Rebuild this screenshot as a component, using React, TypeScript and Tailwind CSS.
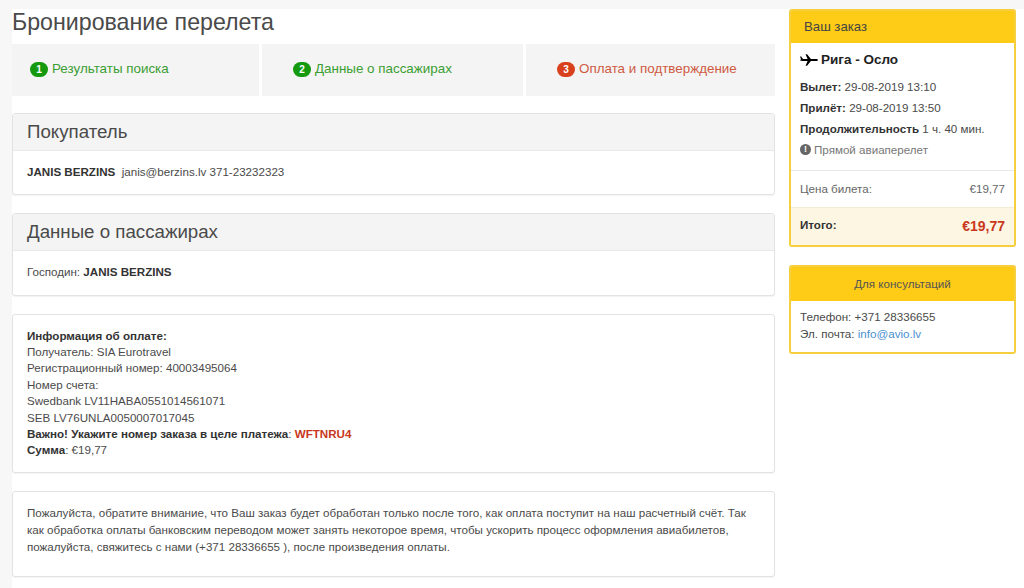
import React from 'react';

function Step({ n, label, red, width, pad }: { n: number; label: string; red?: boolean; width: string; pad: string }) {
  return (
    <div className={`${width} ${pad} h-[52px] pb-[2px] bg-[#f4f4f4] flex items-center`}>
      <span className={`w-[18px] h-[15px] rounded-full text-white text-[10px] font-bold flex items-center justify-center mr-[4px] ${red ? 'bg-[#d9411e]' : 'bg-[#159a0f]'}`}>
        {n}
      </span>
      <span className={`text-[13.4px] ${red ? 'text-[#cf5a42]' : 'text-[#3b9e33]'}`}>{label}</span>
    </div>
  );
}

function Card({ title, children, bodyClass }: { title?: string; children: React.ReactNode; bodyClass: string }) {
  return (
    <section className="border border-[#e3e3e3] rounded-[3px] shadow-[0_1px_1px_rgba(0,0,0,0.05)] bg-white">
      {title && (
        <div className="h-[37px] bg-[#f4f4f4] border-b border-[#e8e8e8] px-[14px] flex items-center text-[18.7px] text-[#4a4a4a]">
          {title}
        </div>
      )}
      <div className={bodyClass}>{children}</div>
    </section>
  );
}

export default function App() {
  return (
    <div className="h-[588px] overflow-hidden bg-[#f7f7f7] pt-[9px] font-['Liberation_Sans',Arial,sans-serif] text-[11.6px] text-[#4a4a4a]">
      <div className="h-full ml-[12px] bg-white flex gap-[14px]">
        <main className="w-[763px] flex flex-col">
          <h1 className="h-[35px] text-[23.2px] leading-[26px] text-[#4a4a4a]">Бронирование перелета</h1>
          <div className="flex gap-[3px]">
            <Step n={1} label="Результаты поиска" width="w-[247px]" pad="pl-[18px]" />
            <Step n={2} label="Данные о пассажирах" width="w-[261px]" pad="pl-[31px]" />
            <Step n={3} label="Оплата и подтверждение" red width="w-[249px]" pad="pl-[31px]" />
          </div>
          <div className="mt-[17px] flex flex-col gap-[18px]">
            <Card title="Покупатель" bodyClass="h-[43px] pb-[2px] px-[14px] flex items-center">
              <span>
                <b className="text-[#333]">JANIS BERZINS</b>&nbsp; janis@berzins.lv 371-23232323
              </span>
            </Card>
            <Card title="Данные о пассажирах" bodyClass="h-[44px] pb-[2px] px-[14px] flex items-center">
              <span>
                Господин: <b className="text-[#333]">JANIS BERZINS</b>
              </span>
            </Card>
            <Card bodyClass="px-[14px] pt-[12.5px] pb-[13.5px] leading-[16.4px]">
              <div><b className="text-[#333]">Информация об оплате:</b></div>
              <div>Получатель: SIA Eurotravel</div>
              <div>Регистрационный номер: 40003495064</div>
              <div>Номер счета:</div>
              <div>Swedbank LV11HABA0551014561071</div>
              <div>SEB LV76UNLA0050007017045</div>
              <div>
                <b className="text-[#333]">Важно! Укажите номер заказа в целе платежа</b>: <b className="text-[#c9381c]">WFTNRU4</b>
              </div>
              <div><b className="text-[#333]">Сумма</b>: €19,77</div>
            </Card>
            <Card bodyClass="px-[14px] pt-[12px] pb-[21px] leading-[17px]">
              Пожалуйста, обратите внимание, что Ваш заказ будет обработан только после того, как оплата поступит на наш расчетный счёт. Так как обработка оплаты банковским переводом может занять некоторое время, чтобы ускорить процесс оформления авиабилетов, пожалуйста, свяжитесь с нами (+371 28336655 ), после произведения оплаты.
            </Card>
          </div>
        </main>

        <aside className="w-[227px] flex flex-col gap-[18px]">
          <section className="border-[2px] border-[#f6cf3f] rounded-[3px] overflow-hidden bg-white">
            <div className="h-[32px] -mx-[2px] -mt-[2px] box-content pt-[2px] bg-[#fecb16] px-[15px] flex items-center text-[13.2px] text-[#444]">
              Ваш заказ
            </div>
            <div className="px-[9px] pt-[7px] h-[128px] border-b border-[#e8e8e8]">
              <div className="flex items-center gap-[3px] text-[13.5px] font-bold text-[#222] h-[20px]">
                <svg viewBox="0 0 18 12" className="w-[18px] h-[12px] fill-black">
                  <path d="M0 2.5h1.2L3 5h4.6L5.6.2h1.5L10.9 5h5.3c1 0 1.8.5 1.8 1s-.8 1-1.8 1h-5.3l-3.8 4.8H5.6L7.6 7H2.4L0 6.4l1-1.2z" />
                </svg>
                Рига - Осло
              </div>
              <div className="mt-[8px] h-[21px]"><b className="text-[#333]">Вылет:</b> 29-08-2019 13:10</div>
              <div className="h-[21px]"><b className="text-[#333]">Прилёт:</b> 29-08-2019 13:50</div>
              <div className="h-[21px]"><b className="text-[#333]">Продолжительность</b> 1 ч. 40 мин.</div>
              <div className="flex items-center gap-[3px] text-[#777]">
                <span className="w-[11px] h-[11px] rounded-full bg-[#666] text-white text-[9px] font-bold flex items-center justify-center">!</span>
                Прямой авиаперелет
              </div>
            </div>
            <div className="h-[36px] px-[9px] flex items-center justify-between text-[#666]">
              <span>Цена билета:</span>
              <span>€19,77</span>
            </div>
            <div className="h-[38px] px-[9px] bg-[#fdf6e3] border-t border-[#f3ecd8] flex items-center justify-between">
              <b className="-mt-[4px] text-[#333]">Итого:</b>
              <b className="text-[14px] text-[#c9381c]">€19,77</b>
            </div>
          </section>
          <section className="border-[2px] border-[#f6cf3f] rounded-[3px] overflow-hidden bg-white">
            <div className="h-[34px] -mx-[2px] -mt-[2px] box-content pt-[2px] bg-[#fecb16] flex items-center justify-center text-[11.6px] text-[#555]">
              Для консультаций
            </div>
            <div className="px-[9px] pt-[7px] pb-[10px] leading-[17px]">
              <div>Телефон: +371 28336655</div>
              <div>Эл. почта: <span className="text-[#4a90d0]">info@avio.lv</span></div>
            </div>
          </section>
        </aside>
      </div>
    </div>
  );
}
